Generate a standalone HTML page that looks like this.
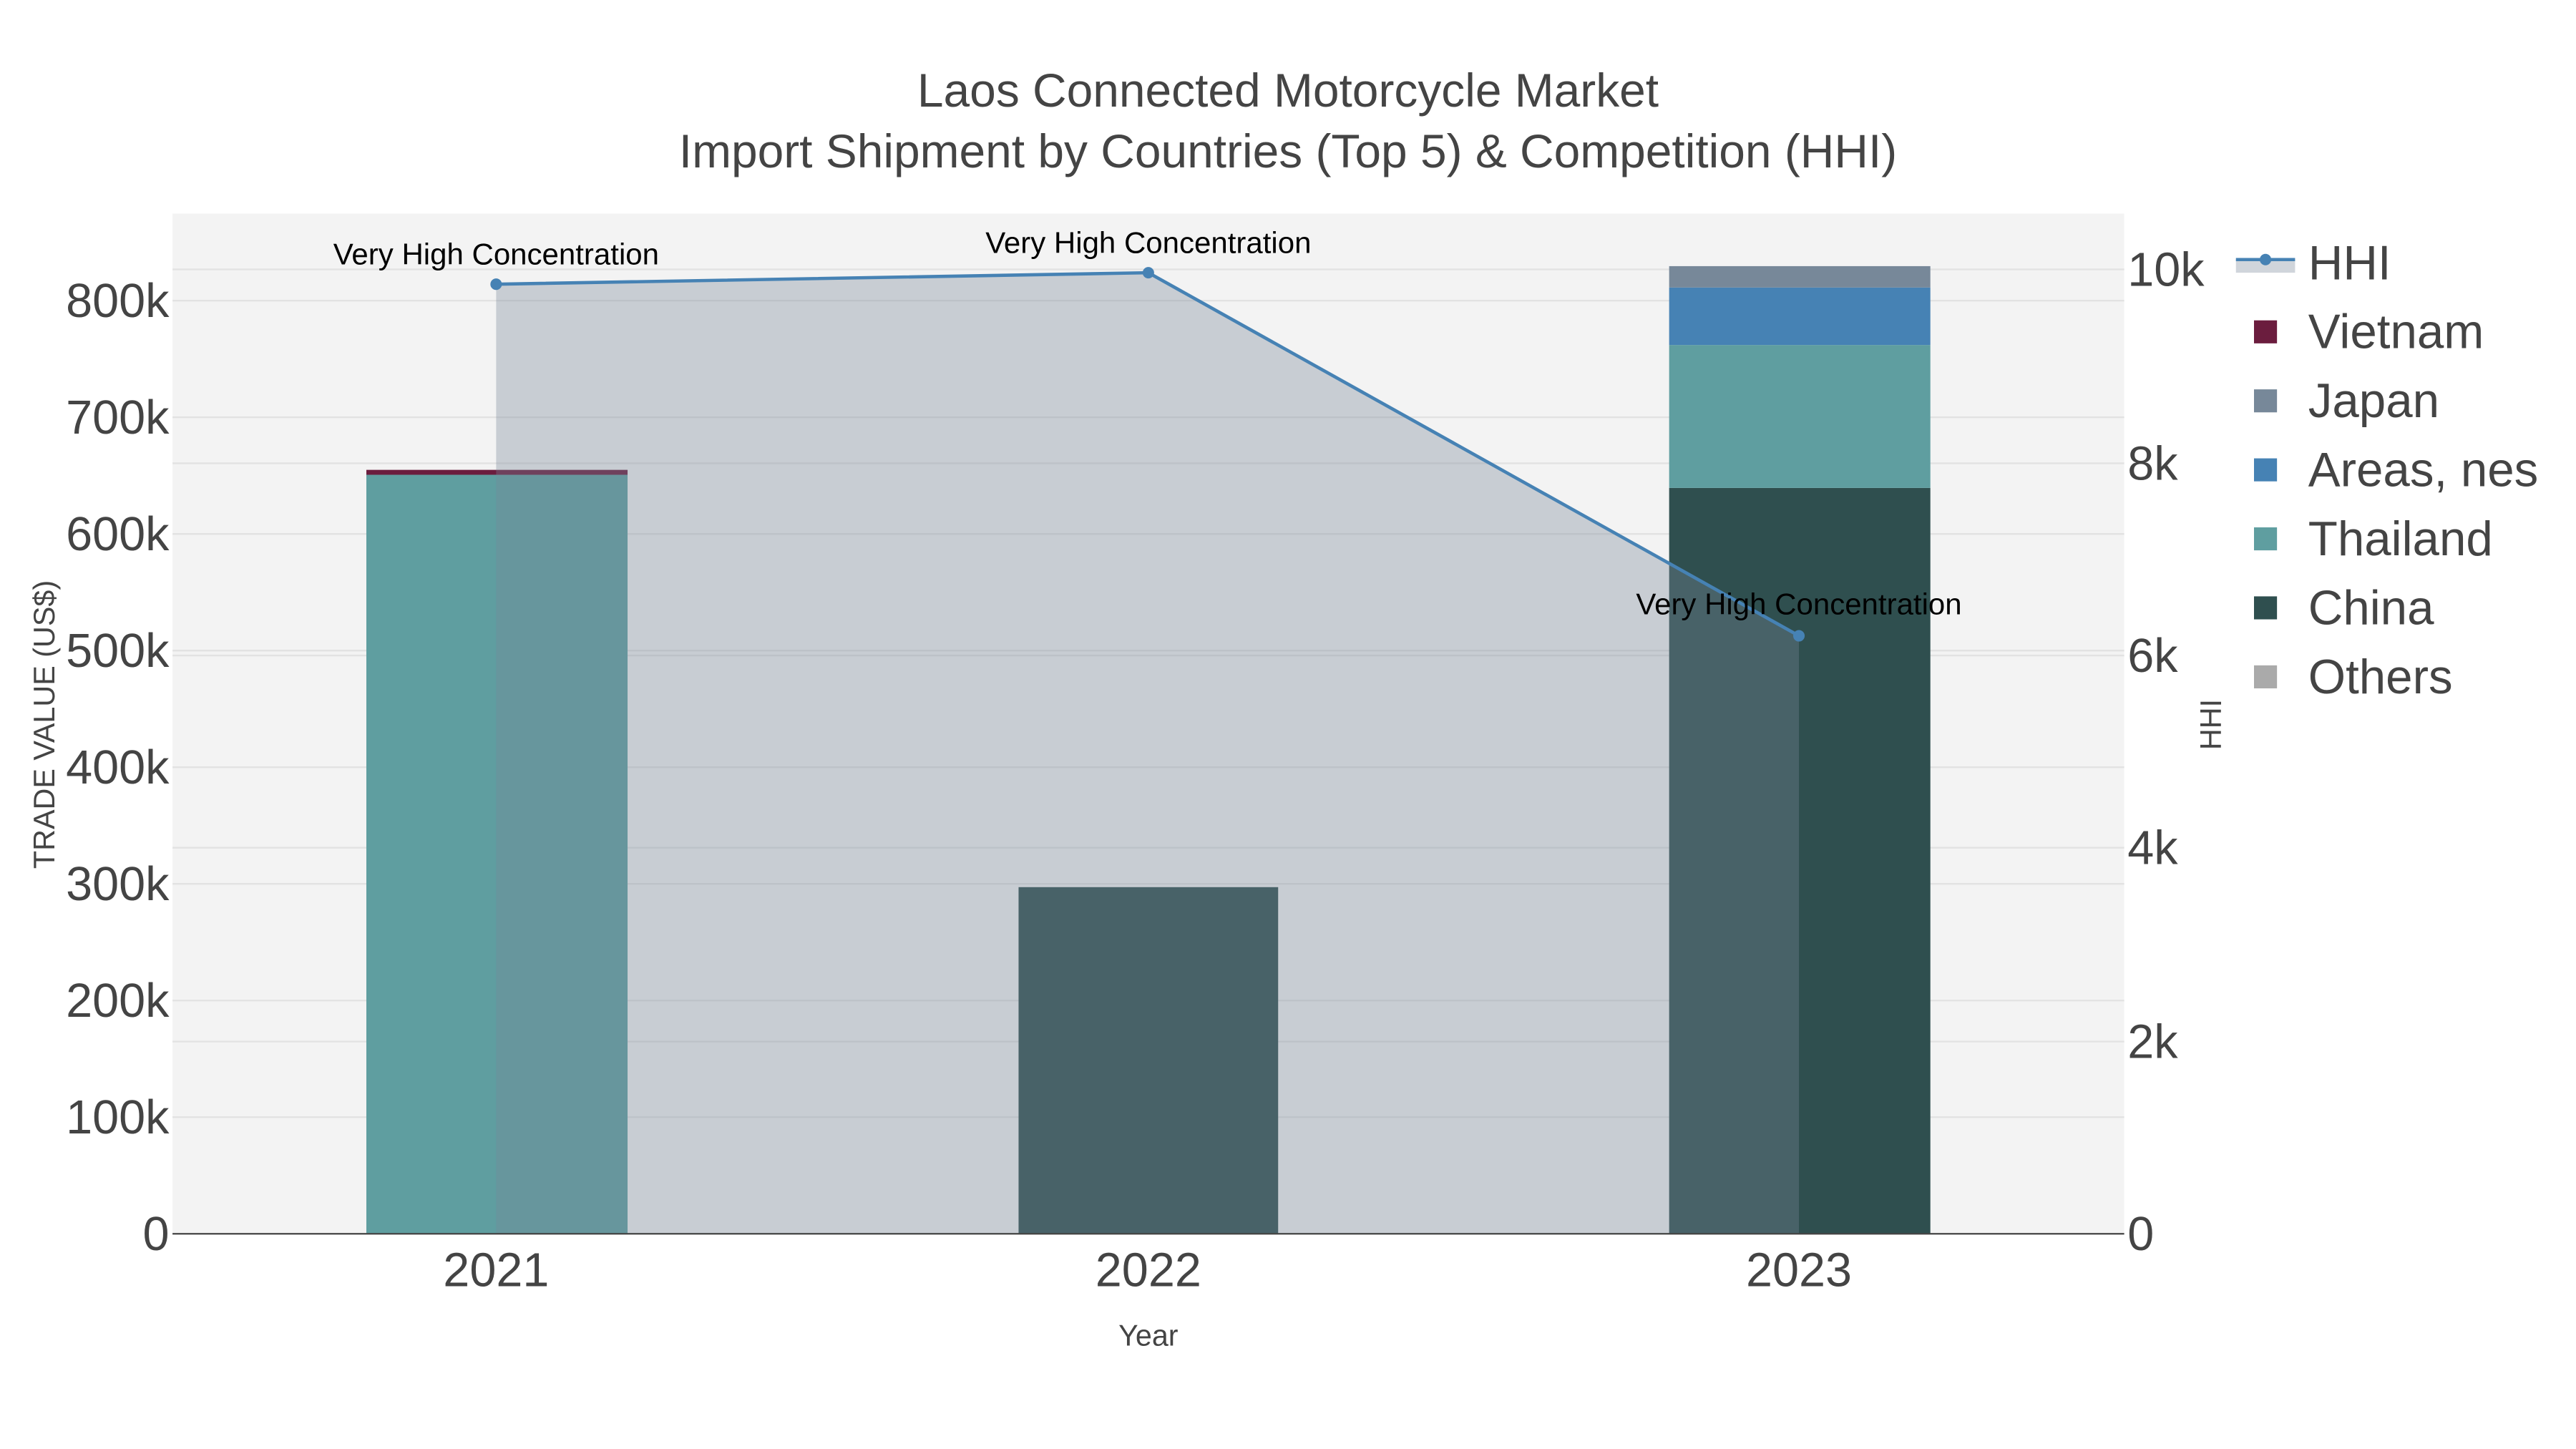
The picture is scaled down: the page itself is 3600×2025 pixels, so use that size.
<!DOCTYPE html>
<html><head><meta charset="utf-8"><style>
html,body{margin:0;padding:0;background:#fff;}
svg{display:block;}
text{font-family:"Liberation Sans",Arial,sans-serif;}
</style></head><body>
<svg width="3600" height="2025" viewBox="0 0 1568 882" preserveAspectRatio="none" xmlns="http://www.w3.org/2000/svg">
<rect x="0" y="0" width="1568" height="882" fill="#fff"/>
<rect x="105" y="130" width="1188" height="621" fill="#f3f3f3"/>
<g stroke="#e2e2e2" stroke-width="1">
<line x1="105" x2="1293" y1="680" y2="680"/><line x1="105" x2="1293" y1="609" y2="609"/>
<line x1="105" x2="1293" y1="538" y2="538"/><line x1="105" x2="1293" y1="467" y2="467"/>
<line x1="105" x2="1293" y1="396" y2="396"/><line x1="105" x2="1293" y1="325" y2="325"/>
<line x1="105" x2="1293" y1="254" y2="254"/><line x1="105" x2="1293" y1="183" y2="183"/>
<line x1="105" x2="1293" y1="634" y2="634"/><line x1="105" x2="1293" y1="516" y2="516"/>
<line x1="105" x2="1293" y1="399" y2="399"/><line x1="105" x2="1293" y1="282" y2="282"/>
<line x1="105" x2="1293" y1="164" y2="164"/>
</g>
<rect x="223" y="289" width="159" height="462" fill="#5f9ea0"/>
<rect x="223" y="286" width="159" height="3" fill="#6b1d3e"/>
<rect x="620" y="540" width="158" height="211" fill="#2f4f4f"/>
<rect x="1016" y="297" width="159" height="454" fill="#2f4f4f"/>
<rect x="1016" y="210" width="159" height="87" fill="#5f9ea0"/>
<rect x="1016" y="175" width="159" height="35" fill="#4682b4"/>
<rect x="1016" y="162" width="159" height="13" fill="#778899"/>
<polygon points="302,173 699,166 1095,387 1095,751 302,751" fill="#778899" fill-opacity="0.35"/>
<polyline points="302,173 699,166 1095,387" fill="none" stroke="#4682b4" stroke-width="2"/>
<circle cx="302" cy="173" r="3.5" fill="#4682b4"/><circle cx="699" cy="166" r="3.5" fill="#4682b4"/><circle cx="1095" cy="387" r="3.5" fill="#4682b4"/>
<line x1="105" x2="1293" y1="751" y2="751" stroke="#444" stroke-width="1"/>
<g font-size="18.3" fill="#000" text-anchor="middle">
<text x="302" y="161">Very High Concentration</text>
<text x="699" y="154">Very High Concentration</text>
<text x="1095" y="374">Very High Concentration</text>
</g>
<g fill="#444" text-anchor="middle" font-size="28.7">
<text x="784" y="65">Laos Connected Motorcycle Market</text>
<text x="784" y="102">Import Shipment by Countries (Top 5) &amp; Competition (HHI)</text>
</g>
<g fill="#444" font-size="29" text-anchor="end">
<text x="103" y="761">0</text><text x="103" y="690">100k</text><text x="103" y="619">200k</text>
<text x="103" y="548">300k</text><text x="103" y="477">400k</text><text x="103" y="406">500k</text>
<text x="103" y="335">600k</text><text x="103" y="264">700k</text><text x="103" y="193">800k</text>
</g>
<g fill="#444" font-size="29" text-anchor="start">
<text x="1295" y="761">0</text><text x="1295" y="644">2k</text><text x="1295" y="526">4k</text>
<text x="1295" y="409">6k</text><text x="1295" y="292">8k</text><text x="1295" y="174">10k</text>
</g>
<g fill="#444" font-size="29" text-anchor="middle">
<text x="302" y="783">2021</text><text x="699" y="783">2022</text><text x="1095" y="783">2023</text>
</g>
<text x="699" y="819" font-size="18" fill="#444" text-anchor="middle">Year</text>
<text transform="translate(33,441) rotate(-90)" font-size="18" fill="#444" text-anchor="middle">TRADE VALUE (US$)</text>
<text transform="translate(1352,441) rotate(-90)" font-size="18" fill="#444" text-anchor="middle">HHI</text>
<rect x="1361" y="158" width="36" height="8" fill="#778899" fill-opacity="0.35"/>
<line x1="1361" x2="1397" y1="158" y2="158" stroke="#4682b4" stroke-width="2"/>
<circle cx="1379" cy="158" r="3.5" fill="#4682b4"/>
<rect x="1372" y="195" width="14" height="14" fill="#6b1d3e"/>
<rect x="1372" y="237" width="14" height="14" fill="#778899"/>
<rect x="1372" y="279" width="14" height="14" fill="#4682b4"/>
<rect x="1372" y="321" width="14" height="14" fill="#5f9ea0"/>
<rect x="1372" y="363" width="14" height="14" fill="#2f4f4f"/>
<rect x="1372" y="405" width="14" height="14" fill="#aaaaaa"/>
<g fill="#444" font-size="29.3">
<text x="1405" y="170">HHI</text><text x="1405" y="212">Vietnam</text><text x="1405" y="254">Japan</text>
<text x="1405" y="296">Areas, nes</text><text x="1405" y="338">Thailand</text><text x="1405" y="380">China</text>
<text x="1405" y="422">Others</text>
</g>
</svg>
</body></html>
